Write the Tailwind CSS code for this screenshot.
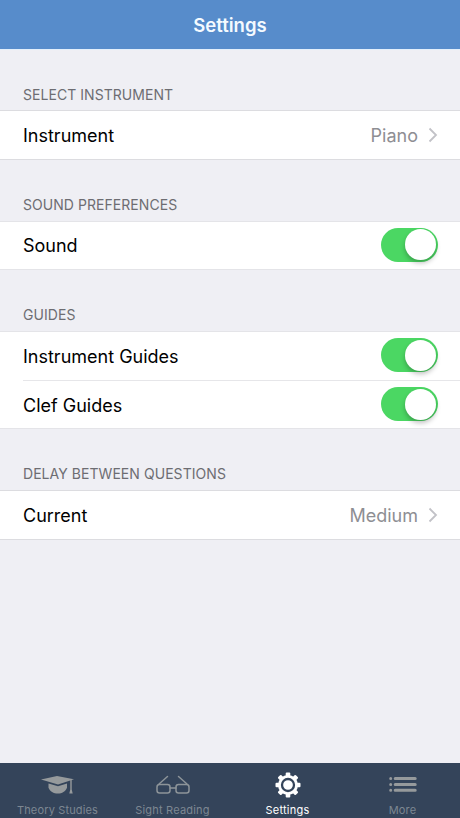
<!DOCTYPE html>
<html lang="en">
<head>
    <meta charset="UTF-8">
    <meta name="viewport" content="width=device-width, initial-scale=1.0">
    <title>Settings</title>
    <script src="https://cdn.jsdelivr.net/npm/@tailwindcss/browser@4"></script>
</head>
<body class="bg-[#efeff4] font-['Inter','Liberation_Sans',sans-serif] text-black">
    <div class="h-[818px] flex flex-col overflow-hidden">
        <!-- Header -->
        <header class="h-[50px] shrink-0 bg-[#578ccb] border-b border-[#e3effb] flex items-center justify-center">
            <h1 class="text-[18.5px] font-semibold text-[#f4faff] pt-0.5">Settings</h1>
        </header>

        <main class="flex-1">
            <!-- Instrument -->
            <h2 class="h-[60px] px-[23px] pt-9 text-[14px] leading-[18px] tracking-[0.05px] text-[#6d6d72]">SELECT INSTRUMENT</h2>
            <div class="h-[50px] bg-white border-y border-[#dcdce0] pl-[23px] pr-[22px] flex items-center justify-between">
                <span class="text-[18px]">Instrument</span>
                <div class="flex items-center gap-2.5">
                    <span class="text-[18px] text-[#8e8e93]">Piano</span>
                    <svg class="w-[10px] h-4" viewBox="0 0 10 16" fill="none" stroke="#c2c2c7" stroke-width="1.8"><path d="M1.500 1.500 8 8l-6.500 6.500"/></svg>
                </div>
            </div>

            <!-- Sound -->
            <h2 class="h-[61px] px-[23px] pt-9 text-[14px] leading-[18px] tracking-[0.05px] text-[#6d6d72]">SOUND PREFERENCES</h2>
            <div class="h-[49px] bg-white border-y border-[#e4e4e8] pl-[23px] pr-[22px] flex items-center justify-between">
                <span class="text-[18px]">Sound</span>
                <div class="w-[57px] h-[34px] mb-0.5 rounded-full bg-[#4bd763] py-[1.5px] pr-0.5 flex justify-end">
                    <div class="w-[31px] h-[31px] rounded-full bg-white shadow-[0_3px_5px_rgba(0,0,0,0.25)]"></div>
                </div>
            </div>

            <!-- Guides -->
            <h2 class="h-[61px] px-[23px] pt-9 text-[14px] leading-[18px] tracking-[0.05px] text-[#6d6d72]">GUIDES</h2>
            <div class="h-[98px] bg-white border-y border-[#e4e4e8] pl-[23px]">
                <div class="h-[49px] border-b border-[#e6e6e9] pr-[22px] flex items-center justify-between">
                    <span class="text-[18px]">Instrument Guides</span>
                    <div class="w-[57px] h-[34px] mb-0.5 rounded-full bg-[#4bd763] py-[1.5px] pr-0.5 flex justify-end">
                        <div class="w-[31px] h-[31px] rounded-full bg-white shadow-[0_3px_5px_rgba(0,0,0,0.25)]"></div>
                    </div>
                </div>
                <div class="h-[47px] pr-[22px] flex items-center justify-between">
                    <span class="text-[18px] pt-px">Clef Guides</span>
                    <div class="w-[57px] h-[34px] mb-px rounded-full bg-[#4bd763] py-[1.5px] pr-0.5 flex justify-end">
                        <div class="w-[31px] h-[31px] rounded-full bg-white shadow-[0_3px_5px_rgba(0,0,0,0.25)]"></div>
                    </div>
                </div>
            </div>

            <!-- Delay -->
            <h2 class="h-[61px] px-[23px] pt-9 text-[14px] leading-[18px] tracking-[0.05px] text-[#6d6d72]">DELAY BETWEEN QUESTIONS</h2>
            <div class="h-[50px] bg-white border-y border-[#dcdce0] pl-[23px] pr-[22px] flex items-center justify-between">
                <span class="text-[18px]">Current</span>
                <div class="flex items-center gap-2.5">
                    <span class="text-[18px] text-[#8e8e93]">Medium</span>
                    <svg class="w-[10px] h-4" viewBox="0 0 10 16" fill="none" stroke="#c2c2c7" stroke-width="1.8"><path d="M1.500 1.500 8 8l-6.500 6.500"/></svg>
                </div>
            </div>
        </main>

        <!-- Tab bar -->
        <nav class="h-[55px] shrink-0 bg-[#34445a] grid grid-cols-4 text-[11px] leading-[14px] text-[#7d8792]">
            <a class="flex flex-col items-center pt-1">
                <svg class="w-9 h-9" viewBox="0 0 36 36" fill="#969a9c">
                    <path d="M1 12.500 17 9l17 3.200-16 5.300z"/>
                    <path d="M8.500 16.500 18 19.200l9-2.700v4.200c-1.500 3.700-5 5.800-9 5.800-4.500 0-8-2-9.500-5.800z"/>
                    <path d="M30.300 13h1.400v9.500l1 4h-3.400l1-4z"/>
                </svg>
                <span class="tracking-[0.15px]">Theory Studies</span>
            </a>
            <a class="flex flex-col items-center pt-1">
                <svg class="w-9 h-9" viewBox="0 0 36 36" fill="none" stroke="#8d9499" stroke-width="1.5" stroke-linecap="round">
                    <rect x="2" y="17.500" width="13" height="8.500" rx="2.500"/>
                    <rect x="21" y="17.500" width="13" height="8.500" rx="2.500"/>
                    <path d="M15 21h6M4 17l8.500-7.500M32 17l-8.500-7.500"/>
                </svg>
                <span class="tracking-[0.2px]">Sight Reading</span>
            </a>
            <a class="flex flex-col items-center pt-1 text-white">
                <svg class="w-9 h-9" viewBox="-18 -18 36 36">
                    <g fill="#fff">
                        <rect x="-2.300" y="-12.500" width="4.600" height="25" rx="1"/>
                        <rect x="-2.300" y="-12.500" width="4.600" height="25" rx="1" transform="rotate(45)"/>
                        <rect x="-2.300" y="-12.500" width="4.600" height="25" rx="1" transform="rotate(90)"/>
                        <rect x="-2.300" y="-12.500" width="4.600" height="25" rx="1" transform="rotate(135)"/>
                        <circle r="10"/>
                    </g>
                    <circle r="6" fill="#fff" stroke="#34445a" stroke-width="2.300"/>
                </svg>
                <span class="tracking-[0.25px]">Settings</span>
            </a>
            <a class="flex flex-col items-center pt-1">
                <svg class="w-9 h-9" viewBox="0 0 36 36" fill="none" stroke="#969a9c" stroke-width="3" stroke-linecap="round">
                    <path d="M5.700 11.500h.01M5.700 17.500h.01M5.700 23.300h.01M10.200 11.500h20M10.200 17.500h20M10.200 23.300h20"/>
                </svg>
                <span class="tracking-[0.2px]">More</span>
            </a>
        </nav>
    </div>
</body>
</html>
